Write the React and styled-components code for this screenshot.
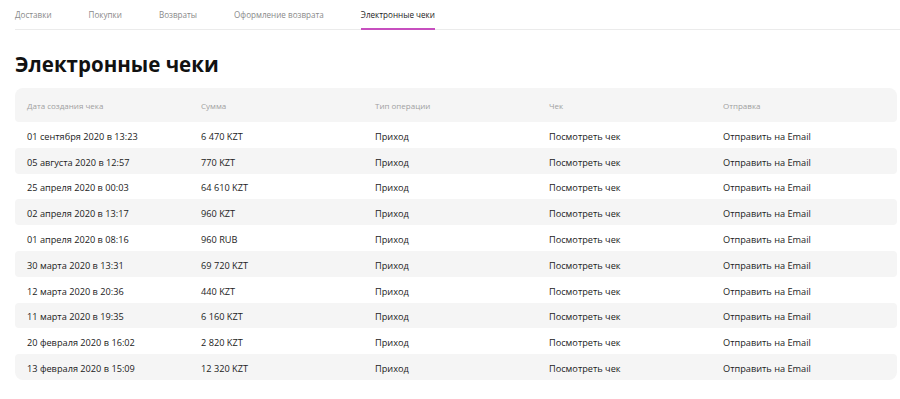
import React from "react";
import styled, { createGlobalStyle } from "styled-components";

const Global = createGlobalStyle`
  html, body { margin: 0; padding: 0; background: #fff; }
  body { font-family: "Open Sans", "Noto Sans", sans-serif; color: #222; }
  * { box-sizing: border-box; }
`;

const Page = styled.div`
  padding: 0 0 0 15px;
  width: 900px;
`;

const Tabs = styled.nav`
  display: flex;
  gap: 37px;
  border-bottom: 1px solid #ebebeb;
  height: 30px;
  align-items: stretch;
`;

const Tab = styled.div`
  position: relative;
  font-size: 8.1px;
  color: ${(p) => (p.$active ? "#222" : "#8a8a8a")};
  padding-top: 9px;
  &::after {
    content: "";
    display: ${(p) => (p.$active ? "block" : "none")};
    position: absolute;
    left: 0;
    right: 0;
    bottom: -1px;
    height: 2px;
    background: #c74fbf;
  }
`;

const Title = styled.h1`
  margin: 19px 0 9px;
  font-size: 20.5px;
  font-weight: 700;
  color: #111;
  line-height: 30px;
`;

const Table = styled.div`
  width: 882px;
  border-radius: 8px;
  overflow: hidden;
`;

const Row = styled.div`
  display: grid;
  grid-template-columns: repeat(5, 174px);
  padding-left: 12px;
  padding-top: ${(p) => (p.$head ? "0" : "3px")};
  align-items: center;
  height: ${(p) => (p.$head ? "34px" : "25.8px")};
  background: ${(p) => (p.$gray ? "#f5f5f5" : "#fff")};
  font-size: ${(p) => (p.$head ? "8px" : "9.2px")};
  color: ${(p) => (p.$head ? "#a0a0a0" : "#222")};
  border-radius: ${(p) => (p.$gray ? "4px" : "0")};
`;

const Cell = styled.div`
  white-space: nowrap;
`;

const heads = ["Дата создания чека", "Сумма", "Тип операции", "Чек", "Отправка"];
const rows = [
  ["01 сентября 2020 в 13:23", "6 470 KZT"],
  ["05 августа 2020 в 12:57", "770 KZT"],
  ["25 апреля 2020 в 00:03", "64 610 KZT"],
  ["02 апреля 2020 в 13:17", "960 KZT"],
  ["01 апреля 2020 в 08:16", "960 RUB"],
  ["30 марта 2020 в 13:31", "69 720 KZT"],
  ["12 марта 2020 в 20:36", "440 KZT"],
  ["11 марта 2020 в 19:35", "6 160 KZT"],
  ["20 февраля 2020 в 16:02", "2 820 KZT"],
  ["13 февраля 2020 в 15:09", "12 320 KZT"],
];
const tabs = ["Доставки", "Покупки", "Возвраты", "Оформление возврата", "Электронные чеки"];

export default function App() {
  return (
    <Page>
      <Global />
      <Tabs>
        {tabs.map((t, i) => (
          <Tab key={t} $active={i === 4}>{t}</Tab>
        ))}
      </Tabs>
      <Title>Электронные чеки</Title>
      <Table>
        <Row $head $gray>
          {heads.map((h) => <Cell key={h}>{h}</Cell>)}
        </Row>
        {rows.map((r, i) => (
          <Row key={i} $gray={i % 2 === 1}>
            <Cell>{r[0]}</Cell>
            <Cell>{r[1]}</Cell>
            <Cell>Приход</Cell>
            <Cell>Посмотреть чек</Cell>
            <Cell>Отправить на Email</Cell>
          </Row>
        ))}
      </Table>
    </Page>
  );
}
